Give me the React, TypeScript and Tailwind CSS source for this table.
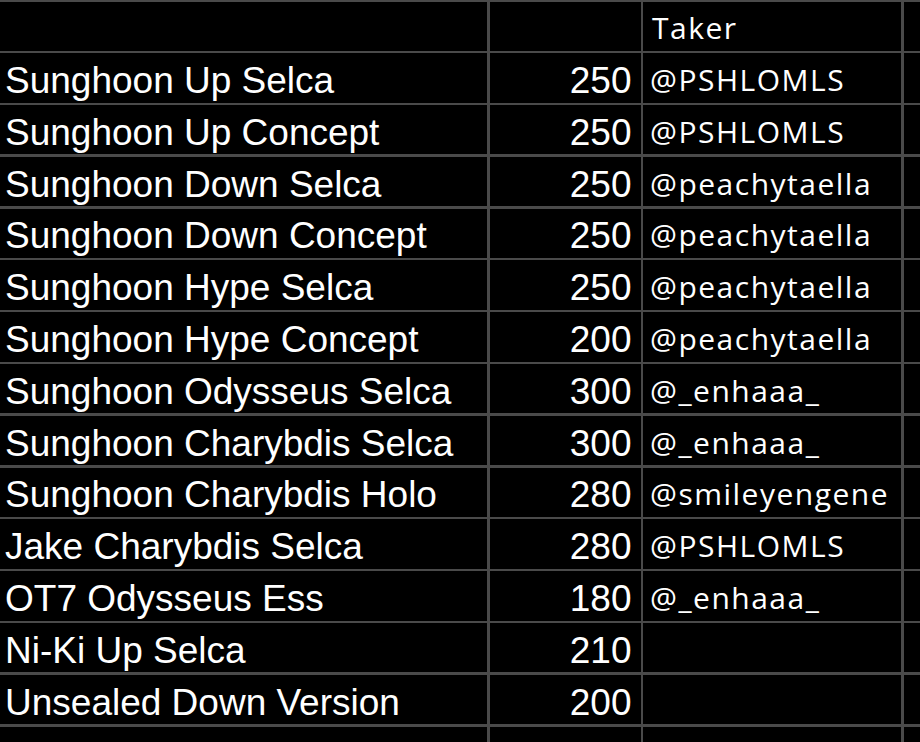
const rows: [string, string, string][] = [
  ["Sunghoon Up Selca", "250", "@PSHLOMLS"],
  ["Sunghoon Up Concept", "250", "@PSHLOMLS"],
  ["Sunghoon Down Selca", "250", "@peachytaella"],
  ["Sunghoon Down Concept", "250", "@peachytaella"],
  ["Sunghoon Hype Selca", "250", "@peachytaella"],
  ["Sunghoon Hype Concept", "200", "@peachytaella"],
  ["Sunghoon Odysseus Selca", "300", "@_enhaaa_"],
  ["Sunghoon Charybdis Selca", "300", "@_enhaaa_"],
  ["Sunghoon Charybdis Holo", "280", "@smileyengene"],
  ["Jake Charybdis Selca", "280", "@PSHLOMLS"],
  ["OT7 Odysseus Ess", "180", "@_enhaaa_"],
  ["Ni-Ki Up Selca", "210", ""],
  ["Unsealed Down Version", "200", ""],
  ["", "", ""],
];

const cell = "bg-black h-[49.3px] flex items-center text-white overflow-hidden whitespace-nowrap";
const sans = "font-['Liberation_Sans',Arial,sans-serif] text-[37px] leading-none pt-[5px]";
const taker = "font-['Open_Sans',sans-serif] text-[30px] tracking-[1.5px] leading-none pt-[4px]";

export default function App() {
  return (
    <div className="w-[920px] h-[742px] bg-black overflow-hidden">
      <div className="grid grid-cols-[487px_151px_258px_17px] gap-[2.5px] bg-[#4a4a4a] pt-[1.5px]">
        {/* header */}
        <div className={cell} />
        <div className={cell} />
        <div className={`${cell} ${taker} pl-[9px]`}>Taker</div>
        <div className={cell} />

        {rows.map(([name, price, who], i) => (
          <div key={i} className="contents">
            <div className={`${cell} ${sans} pl-[5px]`}>{name}</div>
            <div className={`${cell} ${sans} justify-end pr-[9px]`}>{price}</div>
            <div className={`${cell} ${taker} pl-[7px]`}>{who}</div>
            <div className={cell} />
          </div>
        ))}
      </div>
    </div>
  );
}
